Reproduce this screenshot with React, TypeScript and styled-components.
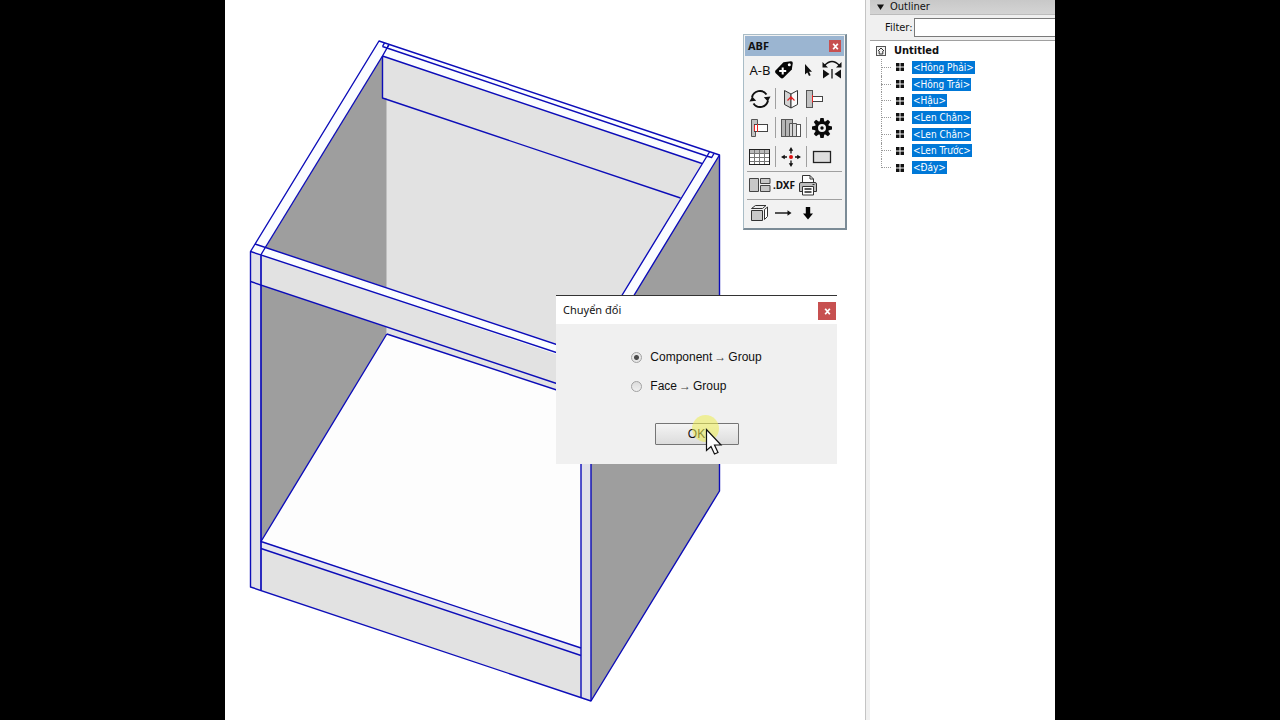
import React from "react";
import styled, { createGlobalStyle, css } from "styled-components";

const UI_FONT = '"DejaVu Sans Condensed", "DejaVu Sans", sans-serif';
const TITLE_FONT = '"Noto Sans", "Open Sans", sans-serif';
const DIALOG_FONT = '"Liberation Sans", Arial, sans-serif';
const EDGE = "#0c0cb8";
const LIGHT = "#e2e2e2";
const DARK = "#9e9e9e";

const GlobalStyle = createGlobalStyle`
  *, *::before, *::after { box-sizing: border-box; }
  body { margin: 0; background: #000; color: #111; overflow: hidden; }
  button, input { font: inherit; color: inherit; margin: 0; }
`;

const Screen = styled.main`
  display: flex;
  min-height: 100vh;
  margin: 0 225px;
  background: #fff;
  overflow: hidden;
`;

const Workspace = styled.section`
  position: relative;
  flex: 1;
  min-width: 0;
`;

const Drawing = styled.svg`
  display: block;
  width: 640px;
  height: 720px;
`;

const floating = css`
  position: absolute;
  z-index: 1;
`;

/* ---------- tool palette ---------- */

const Palette = styled.aside`
  ${floating}
  left: 518px;
  top: 34px;
  width: 104px;
  border: 1px solid #a9bcc6;
  border-right: 2px solid #7b8b96;
  border-bottom: 2px solid #7b8b96;
  background: #f2f2f2;
  padding: 1px;
`;

const PaletteTitle = styled.header`
  display: flex;
  align-items: center;
  justify-content: space-between;
  height: 20px;
  padding: 0 3px;
  background: #9bb5d1;
  font: bold 11px/20px ${TITLE_FONT};
`;

const Close = styled.button<{ $size: number }>`
  display: grid;
  place-items: center;
  width: ${(p) => p.$size}px;
  height: ${(p) => p.$size}px;
  padding: 0;
  border: 0;
  background: #c75050;
  color: #fff;
`;

const ToolGroup = styled.div`
  display: grid;
  grid-auto-rows: 27px;
  gap: 2px;
  padding: 0 0 1px 3px;

  & + & {
    grid-auto-rows: 26px;
    margin: 0 2px;
    padding-left: 1px;
    border-top: 1px solid #a0a0a0;
  }
`;

const ToolRow = styled.div`
  display: flex;
  align-items: center;
`;

const Tool = styled.button`
  display: grid;
  place-items: center;
  flex: none;
  width: 24px;
  height: 24px;
  padding: 0;
  border: 0;
  background: none;

  svg { display: block; overflow: visible; }
`;

const TextTool = styled(Tool)<{ $bold?: boolean }>`
  font: ${(p) => (p.$bold ? "bold 10px" : "13px")} ${TITLE_FONT};
  white-space: nowrap;
`;

const Divider = styled.span`
  flex: none;
  width: 1px;
  height: 21px;
  margin: 0 3px;
  background: #a0a0a0;
`;

/* ---------- dialog ---------- */

const Dialog = styled.form`
  ${floating}
  left: 331px;
  top: 295px;
  width: 281px;
  border-top: 1px solid #333;
  background: #f0f0f0;
  font: 12px/16px ${DIALOG_FONT};
`;

const DialogTitle = styled.header`
  display: flex;
  justify-content: space-between;
  height: 28px;
  padding: 6px 1px 0 7px;
  background: #fff;
  font: 11px/16px ${TITLE_FONT};
`;

const DialogBody = styled.div`
  display: flex;
  flex-direction: column;
  align-items: center;
  padding: 25px 0 19px;
`;

const Options = styled.div`
  display: grid;
  gap: 13px;
  margin-bottom: 29px;
`;

const Option = styled.label`
  display: flex;
  align-items: center;
  gap: 8px;
`;

const Radio = styled.input`
  appearance: none;
  width: 11px;
  height: 11px;
  border: 1px solid #a2a2a2;
  border-radius: 50%;
  background: linear-gradient(#dcdcdc, #f0f0f0);

  &:checked {
    background: radial-gradient(circle, #4a4a4a 0 2px, #e6e6e6 3px);
  }
`;

const Arrow = styled.span`
  margin: 0 2px;
  font-family: "Liberation Serif", serif;
  color: #444;
`;

const OkButton = styled.button`
  width: 84px;
  height: 22px;
  padding: 0;
  border: 1px solid #757575;
  border-radius: 1px;
  background: linear-gradient(#f4f4f4, #dcdcdc);
`;

const Pointer = styled.svg`
  position: absolute;
  z-index: 2;
  left: 466px;
  top: 414px;
  pointer-events: none;
`;

/* ---------- outliner ---------- */

const Tray = styled.section`
  flex: none;
  width: 190px;
  border-left: 1px solid #c4c4c4;
  background: #f0f0f0;
  padding-left: 4px;
  display: flex;
  flex-direction: column;
  font: 11px/14px ${UI_FONT};
  overflow: hidden;
`;

const TrayTitle = styled.header`
  display: flex;
  align-items: center;
  gap: 6px;
  height: 15px;
  padding: 0 0 1px 7px;
  background: linear-gradient(#c8c8c8, #d4d4d4);
  border-bottom: 1px solid #bcbcbc;
`;

const FilterRow = styled.label`
  display: flex;
  gap: 1px;
  height: 26px;
  padding: 3px 0 0 15px;
  line-height: 19px;
  border-bottom: 1px solid #a0a0a0;
`;

const FilterInput = styled.input`
  flex: none;
  width: 180px;
  height: 19px;
  border: 1px solid #7a7a7a;
  background: #fff;
`;

const Tree = styled.div`
  flex: 1;
  padding: 2px 0 0 6px;
  background: #fff;
`;

const TreeRoot = styled.div`
  display: flex;
  align-items: center;
  gap: 8px;
  height: 16px;
  font-weight: bold;
`;

const TreeList = styled.ul`
  display: grid;
  grid-auto-rows: 1fr;
  height: 117px;
  margin: 0;
  padding: 0 0 0 5px;
  list-style: none;
  font-size: 10px;
`;

const TreeItem = styled.li`
  display: grid;
  grid-template-columns: 10px 8px auto;
  column-gap: 5px;
  align-items: center;
  justify-content: start;
  position: relative;

  &::before {
    content: "";
    position: absolute;
    left: 0;
    top: 0;
    height: 100%;
    border-left: 1px dotted #999;
  }
  &:last-child::before { height: 50%; }
`;

const Branch = styled.span`
  border-top: 1px dotted #999;
`;

const ItemName = styled.span`
  margin-left: 3px;
  padding: 0 1px;
  height: 13px;
  line-height: 13px;
  background: #0078d7;
  color: #fff;
`;

const parts = [
  "<Hông Phải>",
  "<Hông Trái>",
  "<Hậu>",
  "<Len Chân>",
  "<Len Chân>",
  "<Len Trước>",
  "<Đáy>",
];

const Cross = ({ s }: { s: number }) => (
  <svg width={s} height={s} viewBox="0 0 6 6" stroke="#fff" strokeWidth="1.5">
    <path d="M1 0.6L5 5.4M5 0.6L1 5.4" />
  </svg>
);

const Icon = ({ children, w = 22, h = 20 }: { children: React.ReactNode; w?: number; h?: number }) => (
  <svg width={w} height={h} viewBox={`0 0 ${w} ${h}`} fill="none" stroke="#222" strokeWidth="1">
    {children}
  </svg>
);

const TagIcon = () => (
  <Icon>
    <path d="M2.5 10.5L10.5 2.2L18 1.2Q19.8 1.2 19.8 3L18.8 9.5L10.5 17.8Q9 19.2 7.5 17.8L2.5 13Q1.5 11.8 2.5 10.5Z" fill="#050505" stroke="none" />
    <circle cx="16.3" cy="4.8" r="1.5" fill="#fff" stroke="none" />
    <path d="M9.7 7.5V14.5M6.2 11H13.2" stroke="#fff" strokeWidth="2" />
  </Icon>
);

const SelectIcon = () => (
  <Icon>
    <path d="M8 4V14.5L10.3 12.4L12 16L13.7 15.2L12 11.7H15Z" fill="#111" stroke="none" />
  </Icon>
);

const FlipIcon = () => (
  <Icon>
    <path d="M3.5 5.5Q11 -2.5 18.5 5.5" stroke="#111" strokeWidth="1.6" />
    <path d="M1.5 2V7.5H7ZM20.5 2V7.5H15Z" fill="#111" stroke="none" />
    <path d="M2 9.5L8.5 14L2 18.5ZM20 9.5L13.5 14L20 18.5Z" fill="#111" stroke="none" />
    <path d="M11 9V18.5" stroke="#111" strokeWidth="1.3" />
  </Icon>
);

const RotateIcon = () => (
  <Icon>
    <path d="M3 8.5A8 8 0 0 1 17.5 5.5M19 11.5A8 8 0 0 1 4.5 14.5" stroke="#111" strokeWidth="1.9" />
    <path d="M14.8 8.2L21.5 7.5L18.8 12.5ZM7.2 11.8L0.5 12.5L3.2 7.5Z" fill="#111" stroke="none" />
  </Icon>
);

const FoldIcon = () => (
  <Icon>
    <path d="M4.5 1.5L11 5V19L4.5 15.5Z" fill="#d2d2d2" stroke="#333" />
    <path d="M17.5 1.5L11 5V19L17.5 15.5Z" fill="#fafafa" stroke="#333" />
    <path d="M7.5 11.5L11 7.8L14.5 11.5M11 8V11" stroke="#d22" strokeWidth="1.2" />
  </Icon>
);

const JointIcon = () => (
  <Icon>
    <rect x="2.5" y="1.5" width="6" height="17" fill="#c2c2c2" stroke="#555" />
    <rect x="8.5" y="7.5" width="10" height="5" fill="#fff" stroke="#444" />
    <path d="M8.5 6V13.5" stroke="#e22" />
  </Icon>
);

const InsetIcon = () => (
  <Icon>
    <path d="M2.5 1.5H8.5V6.5H5.5V13.5H6.5V18.5H2.5Z" fill="#c2c2c2" stroke="#555" />
    <rect x="5.5" y="6.5" width="13" height="7" fill="#fff" stroke="#444" />
    <path d="M8.5 6V14M5.5 7V13" stroke="#e22" />
  </Icon>
);

const PanelsIcon = () => (
  <Icon>
    <rect x="1.5" y="1.5" width="11" height="17" fill="#b5b5b5" stroke="#555" />
    <path d="M5.5 2V18" stroke="#555" />
    <path d="M9.5 5.5H16.5V18.5H9.5Z" fill="#d7d7d7" stroke="#555" />
    <path d="M12.5 5V18.5" stroke="#555" />
    <rect x="16.5" y="6.5" width="4" height="12" fill="#fff" stroke="#555" />
  </Icon>
);

const GearIcon = () => (
  <Icon>
    <g transform="translate(11 10)" stroke="none" fill="#0a0a0a">
      {[0, 45, 90, 135, 180, 225, 270, 315].map((a) => (
        <path key={a} d="M-2.4 -6L-1.6 -10H1.6L2.4 -6Z" transform={`rotate(${a})`} />
      ))}
    </g>
    <circle cx="11" cy="10" r="5.5" fill="#f2f2f2" stroke="#0a0a0a" strokeWidth="3" />
    <circle cx="11" cy="10" r="1.7" fill="#0a0a0a" stroke="none" />
  </Icon>
);

const TableIcon = () => (
  <Icon>
    <rect x="0.5" y="2.5" width="20" height="15" fill="#fff" stroke="#222" />
    <rect x="1" y="3" width="19" height="3" fill="#bbb" stroke="none" />
    <path d="M1 6.5H20M1 10.5H20M1 14.5H20" stroke="#777" />
    <path d="M5.5 3V17M10.5 3V17M15.5 3V17" stroke="#777" />
  </Icon>
);

const MoveIcon = () => (
  <Icon>
    <path d="M11 2V6.5M11 13.5V18M3 10H7M15 10H19" stroke="#111" strokeWidth="1.3" />
    <path d="M8.8 3.8L11 0L13.2 3.8ZM8.8 16.2L11 20L13.2 16.2ZM4.8 7.8L1 10L4.8 12.2ZM17.2 7.8L21 10L17.2 12.2Z" fill="#111" stroke="none" />
    <circle cx="11" cy="10" r="2" fill="#d11" stroke="none" />
  </Icon>
);

const RectIcon = () => (
  <Icon>
    <rect x="2.5" y="4.5" width="17" height="11" fill="#dedede" stroke="#222" strokeWidth="1.3" />
  </Icon>
);

const LayoutIcon = () => (
  <Icon>
    <path d="M0.5 3.5H9.5V16.5H0.5ZM11.5 3.5H21V8.5H11.5ZM11.5 10.5H21V16.5H11.5Z" fill="#c8c8c8" stroke="#444" />
  </Icon>
);

const PrinterIcon = () => (
  <Icon>
    <path d="M5.5 8V0.5H13L16.5 4V8" fill="#fff" stroke="#333" />
    <path d="M13 0.5V4H16.5" stroke="#333" />
    <path d="M2.5 16.5V9Q2.5 7.5 4 7.5H18Q19.5 7.5 19.5 9V16.5Z" fill="#bdbdbd" stroke="#333" />
    <path d="M5.5 11.5H16.5V20H5.5Z" fill="#fff" stroke="#333" />
    <path d="M7.5 14H14.5M7.5 17H14.5" stroke="#222" strokeWidth="1.3" />
    <path d="M15.5 9.5H17.5" stroke="#333" />
  </Icon>
);

const BoxIcon = () => (
  <Icon>
    <path d="M2.5 7.5H13.5V17.5H2.5Z" fill="#c8c8c8" stroke="#333" />
    <path d="M2.5 5.5L6.5 2.5H17L13.5 5.5Z" fill="#eee" stroke="#333" />
    <path d="M15.5 6.5L18.5 4V13.5L15.5 16.5Z" fill="#fff" stroke="#333" />
  </Icon>
);

const RightIcon = () => (
  <Icon>
    <path d="M2 10H16" stroke="#111" strokeWidth="1.4" />
    <path d="M14.5 7.2L18.5 10L14.5 12.8Z" fill="#111" stroke="none" />
  </Icon>
);

const DownIcon = () => (
  <Icon>
    <path d="M8.8 4H13.2V10.5H16L11 16.5L6 10.5H8.8Z" fill="#050505" stroke="none" />
  </Icon>
);

const HomeIcon = () => (
  <svg width="10" height="10" viewBox="0 0 10 10" fill="none" stroke="#555">
    <rect x="0.5" y="0.5" width="9" height="9" fill="#f4f4f4" />
    <path d="M2 5L5 2L8 5M3.2 5V8H6.8V5" stroke="#333" />
  </svg>
);

const GroupIcon = () => (
  <svg width="8" height="8" viewBox="0 0 8 8" fill="#111">
    <path d="M0 0H3.5V3.5H0ZM4.5 0H8V3.5H4.5ZM0 4.5H3.5V8H0ZM4.5 4.5H8V8H4.5Z" />
  </svg>
);

const ToolButton = ({ label, children }: { label: string; children: React.ReactNode }) => (
  <Tool type="button" aria-label={label}>{children}</Tool>
);

const Cabinet = () => (
  <Drawing viewBox="225 0 640 720" role="img" aria-label="Cabinet model">
    <g>
      {/* interior: back, left side, floor */}
      <path d="M382.5 56L702 163L591 345V420L386.5 335Z" fill={LIGHT} />
      <path d="M382.5 56V98H386.5V335L261 541V255Z" fill={DARK} />
      <path d="M386.5 334L581 398V648L261 541Z" fill="#fdfdfd" />
      {/* right side, outer face */}
      <path d="M719.5 155V491L591 701V366Z" fill={DARK} />
      {/* uprights and rails */}
      <path d="M250.5 251L261 255V590.5L250.5 587Z" fill="#e0e0e8" />
      <path d="M581 355L591 358V701L581 697.5Z" fill="#e0e0e8" />
      <path d="M261 255L591 364V396L261 285Z" fill={LIGHT} />
      <path d="M261 541L581 648V655.5L261 548.5Z" fill="#e6e6ee" />
      <path d="M261 548.5L581 655.5V697.5L261 590.5Z" fill={LIGHT} />
      {/* top faces */}
      <path d="M379 41L719.5 155L711 170L702 163.5L382.5 56Z" fill="#fbfdff" />
      <path d="M379 41L389 44L260.5 255.5L250.5 251.5Z" fill="#fbfdff" />
      <path d="M710 152L719.5 155L591 366L581 362Z" fill="#fbfdff" />
      <path d="M255 244L591 355V366L250.5 251.5Z" fill="#fbfdff" />
    </g>
    <g fill="none" stroke={EDGE} strokeWidth="1.4" strokeLinejoin="round">
      <path d="M250.5 251.5L379 41L719.5 155V491L591 701L250.5 587Z" />
      <path d="M382.5 46.5L387 48L706.5 156M382.5 46.5L384.5 42.8M387 48L389 44.5" />
      <path d="M382.5 56L702 163.5M382.5 56V98L680.5 198" />
      <path d="M389 44.5L382.5 56M265.3 247.5L260.5 255.5" />
      <path d="M382.5 56L265.3 247.5" />
      <path d="M255 244L591 356M250.5 251.5L591 364M250.5 281.5L591 395" />
      <path d="M261 255.5V590.5" strokeWidth="1.7" />
      <path d="M386.8 334L581 398M386.8 334L261 541.5L581 648M261 548.5L581 655.5" />
      <path d="M709.5 152L591 346M719.5 155L591 366M706.5 156L711.7 157.5L714 153.5" />
      <path d="M581 362V697.5M591 366V701" />
    </g>
  </Drawing>
);

export default function App() {
  return (
    <>
      <GlobalStyle />
      <Screen>
        <Workspace>
          <Cabinet />

          <Palette>
            <PaletteTitle>
              ABF
              <Close $size={12} type="button" aria-label="Close palette"><Cross s={7} /></Close>
            </PaletteTitle>
            <ToolGroup>
              <ToolRow>
                <TextTool type="button">A-B</TextTool>
                <ToolButton label="Tag"><TagIcon /></ToolButton>
                <ToolButton label="Select"><SelectIcon /></ToolButton>
                <ToolButton label="Flip"><FlipIcon /></ToolButton>
              </ToolRow>
              <ToolRow>
                <ToolButton label="Rotate"><RotateIcon /></ToolButton>
                <Divider />
                <ToolButton label="Fold"><FoldIcon /></ToolButton>
                <ToolButton label="Joint"><JointIcon /></ToolButton>
              </ToolRow>
              <ToolRow>
                <ToolButton label="Inset joint"><InsetIcon /></ToolButton>
                <Divider />
                <ToolButton label="Panels"><PanelsIcon /></ToolButton>
                <Divider />
                <ToolButton label="Settings"><GearIcon /></ToolButton>
              </ToolRow>
              <ToolRow>
                <ToolButton label="Table"><TableIcon /></ToolButton>
                <Divider />
                <ToolButton label="Origin"><MoveIcon /></ToolButton>
                <Divider />
                <ToolButton label="Rectangle"><RectIcon /></ToolButton>
              </ToolRow>
            </ToolGroup>
            <ToolGroup>
              <ToolRow>
                <ToolButton label="Nesting"><LayoutIcon /></ToolButton>
                <TextTool type="button" $bold>.DXF</TextTool>
                <ToolButton label="Print"><PrinterIcon /></ToolButton>
              </ToolRow>
            </ToolGroup>
            <ToolGroup>
              <ToolRow>
                <ToolButton label="Box"><BoxIcon /></ToolButton>
                <ToolButton label="Right"><RightIcon /></ToolButton>
                <ToolButton label="Down"><DownIcon /></ToolButton>
              </ToolRow>
            </ToolGroup>
          </Palette>

          <Dialog onSubmit={(e) => e.preventDefault()}>
            <DialogTitle>
              Chuyển đổi
              <Close $size={18} type="button" aria-label="Close dialog"><Cross s={7} /></Close>
            </DialogTitle>
            <DialogBody>
              <Options>
                <Option>
                  <Radio type="radio" name="convert" defaultChecked />
                  <span>Component<Arrow>→</Arrow>Group</span>
                </Option>
                <Option>
                  <Radio type="radio" name="convert" />
                  <span>Face<Arrow>→</Arrow>Group</span>
                </Option>
              </Options>
              <OkButton type="submit">OK</OkButton>
            </DialogBody>
          </Dialog>

          <Pointer width="32" height="44" viewBox="0 0 32 44" aria-hidden="true">
            <circle cx="14.5" cy="14.5" r="13.5" fill="#eded50" fillOpacity="0.55" />
            <path d="M15.5 15.5V36.5L20 32.5L23.5 40L27 38.5L23.5 31H30Z" fill="#fff" stroke="#111" strokeWidth="1.2" />
          </Pointer>
        </Workspace>

        <Tray>
          <TrayTitle>
            <svg width="7" height="6" viewBox="0 0 7 6"><path d="M0 0.5H7L3.5 6Z" fill="#111" /></svg>
            Outliner
          </TrayTitle>
          <FilterRow>
            Filter:
            <FilterInput type="text" />
          </FilterRow>
          <Tree>
            <TreeRoot><HomeIcon />Untitled</TreeRoot>
            <TreeList>
              {parts.map((name, i) => (
                <TreeItem key={i}>
                  <Branch />
                  <GroupIcon />
                  <ItemName>{name}</ItemName>
                </TreeItem>
              ))}
            </TreeList>
          </Tree>
        </Tray>
      </Screen>
    </>
  );
}
